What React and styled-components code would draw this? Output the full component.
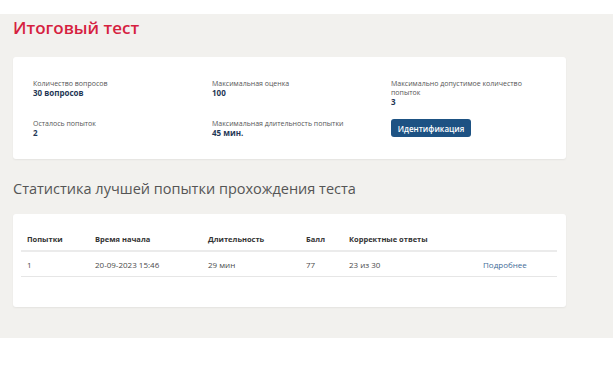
import React from "react"
import styled, { createGlobalStyle } from "styled-components"

const info = [
  { label: "Количество вопросов", value: "30 вопросов" },
  { label: "Максимальная оценка", value: "100" },
  { label: "Максимально допустимое количество попыток", value: "3" },
  { label: "Осталось попыток", value: "2" },
  { label: "Максимальная длительность попытки", value: "45 мин." },
]

const columns = ["Попытки", "Время начала", "Длительность", "Балл", "Корректные ответы", ""]

const attempts = [
  { n: "1", start: "20-09-2023 15:46", duration: "29 мин", score: "77", correct: "23 из 30" },
]

const App = () => {
  return (
    <>
      <GlobalStyle />
      <Page>
        <Section>
          <Title>Итоговый тест</Title>
          <InfoCard>
            {info.map(item => (
              <InfoItem key={item.label}>
                <Label>{item.label}</Label>
                <Value>{item.value}</Value>
              </InfoItem>
            ))}
            <InfoItem>
              <Button>Идентификация</Button>
            </InfoItem>
          </InfoCard>
          <Subtitle>Статистика лучшей попытки прохождения теста</Subtitle>
          <TableCard>
            <HeadRow>
              {columns.map((c, i) => (
                <HeadCell key={i}>{c}</HeadCell>
              ))}
            </HeadRow>
            {attempts.map(a => (
              <Row key={a.n}>
                <Cell>{a.n}</Cell>
                <Cell>{a.start}</Cell>
                <Cell>{a.duration}</Cell>
                <Cell>{a.score}</Cell>
                <Cell>{a.correct}</Cell>
                <Cell>
                  <MoreLink href="#">Подробнее</MoreLink>
                </Cell>
              </Row>
            ))}
          </TableCard>
        </Section>
      </Page>
    </>
  )
}

export default App

const GlobalStyle = createGlobalStyle`
  body {
    margin: 0;
    background: #fff;
    font-family: "Open Sans", "Noto Sans", sans-serif;
  }
`

const Page = styled.div`
  padding-top: 14px;
  width: 615px;
  height: 362px;
`

const Section = styled.section`
  width: 613px;
  height: 324px;
  box-sizing: border-box;
  background: #f2f1ee;
  padding: 4px 13px 0;
`

const Title = styled.h1`
  margin: 0;
  font-size: 17px;
  line-height: 20px;
  font-weight: 600;
  color: #d6213f;
`

const InfoCard = styled.div`
  margin-top: 19px;
  width: 553px;
  box-sizing: border-box;
  padding: 22px 20px;
  background: #fff;
  border-radius: 3px;
  box-shadow: 0 1px 2px rgba(0, 0, 0, 0.06);
  display: grid;
  grid-template-columns: 179px 179px 175px;
  row-gap: 13px;
  align-items: start;
`

const InfoItem = styled.div`
  max-width: 132px;
  display: flex;
  flex-direction: column;
`

const Label = styled.div`
  font-size: 7px;
  line-height: 9px;
  color: #555;
`

const Value = styled.div`
  font-size: 8px;
  line-height: 9px;
  font-weight: 700;
  color: #1f3756;
`

const Button = styled.button`
  width: 80px;
  height: 18px;
  padding: 0;
  border: none;
  border-radius: 3px;
  background: #1d5283;
  color: #fff;
  font-family: inherit;
  font-size: 8px;
  font-weight: 600;
  cursor: pointer;
`

const Subtitle = styled.h2`
  margin: 20px 0 0;
  font-size: 14.5px;
  line-height: 20px;
  font-weight: 400;
  color: #555;
`

const TableCard = styled.div`
  margin-top: 15px;
  width: 553px;
  box-sizing: border-box;
  padding: 14px 9px 30px 8px;
  background: #fff;
  border-radius: 3px;
  box-shadow: 0 1px 2px rgba(0, 0, 0, 0.06);
`

const grid = `
  display: grid;
  grid-template-columns: 68px 113px 98px 43px 134px 1fr;
  align-items: center;
`

const HeadRow = styled.div`
  ${grid}
  height: 22px;
  border-bottom: 2px solid #ebebeb;
`

const Row = styled.div`
  ${grid}
  height: 24px;
  border-bottom: 1px solid #e6e6e6;
`

const HeadCell = styled.div`
  padding-left: 6px;
  font-size: 7.5px;
  font-weight: 700;
  color: #333;
`

const Cell = styled.div`
  padding-left: 6px;
  font-size: 8px;
  color: #4a4a4a;
`

const MoreLink = styled.a`
  color: #3f6b98;
  text-decoration: none;
`
